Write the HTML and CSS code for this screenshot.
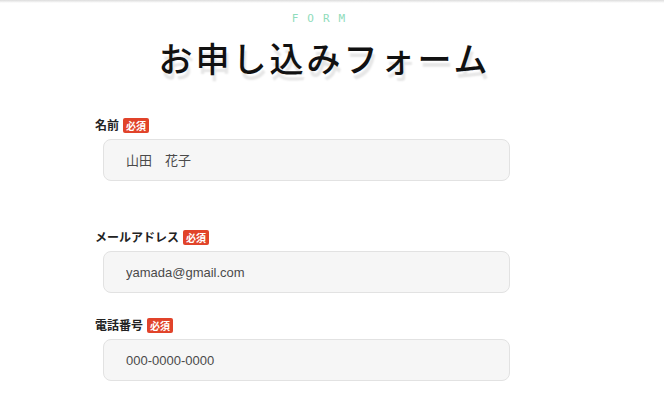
FILE: index.html
```html
<!DOCTYPE html>
<html lang="ja">

<head>
    <meta charset="utf-8">
    <title>お申し込みフォーム</title>
    <link rel="stylesheet" href="styles.css">
</head>

<body>
    <div class="topline"></div>
    <div class="heading">
        <p class="sub">FORM</p>
        <h1>お申し込みフォーム</h1>
    </div>

    <form class="form">
        <div class="field first">
            <label for="name">名前<span class="req">必須</span></label>
            <input type="text" id="name" placeholder="山田　花子">
        </div>
        <div class="field">
            <label for="mail">メールアドレス<span class="req">必須</span></label>
            <input type="email" id="mail" placeholder="yamada@gmail.com">
        </div>
        <div class="field">
            <label for="tel">電話番号<span class="req">必須</span></label>
            <input type="tel" id="tel" placeholder="000-0000-0000">
        </div>
    </form>
</body>
</html>
```

FILE: styles.css
```css
body {
    margin: 0;
    background-color: #fff;
    font-family: "Noto Sans CJK JP", "Noto Sans", sans-serif;
    color: #111;
}

.topline {
    height: 3px;
    background: linear-gradient(#dcdcdc, #fff);
}

.heading {
    text-align: center;
    padding-right: 18px;
}

.sub {
    margin: 9px 0 0 0;
    font-family: "DejaVu Sans Mono", monospace;
    font-size: 11px;
    line-height: 14px;
    letter-spacing: 9px;
    color: #8fdcbb;
}

h1 {
    margin: 9px 0 0 0;
    font-size: 34px;
    line-height: 46px;
    letter-spacing: 3px;
    padding-left: 3px;
    font-weight: 500;
    color: #111;
    text-shadow: 2px 6px 2px #e6e6e6;
}

.form {
    margin-left: 95px;
    width: 415px;
    margin-top: 36px;
}

.field {
    display: flex;
    flex-direction: column;
    margin-bottom: 24px;
}

.field.first {
    margin-bottom: 48px;
}

label {
    font-size: 12px;
    font-weight: bold;
    line-height: 16px;
    color: #222;
    display: flex;
    align-items: center;
}

.req {
    background-color: #e1432a;
    color: #fff;
    font-size: 10px;
    font-weight: bold;
    line-height: 15px;
    padding: 0 3px;
    margin-left: 4px;
    border-radius: 2px;
}

input {
    margin: 6px 0 0 8px;
    height: 42px;
    box-sizing: border-box;
    border: 1px solid #e2e2e2;
    border-radius: 8px;
    background-color: #f6f6f6;
    padding: 0 22px;
    font-family: "Liberation Sans", "Noto Sans CJK JP", sans-serif;
    font-size: 13px;
}

input::placeholder {
    color: #4a4a4a;
}
```
